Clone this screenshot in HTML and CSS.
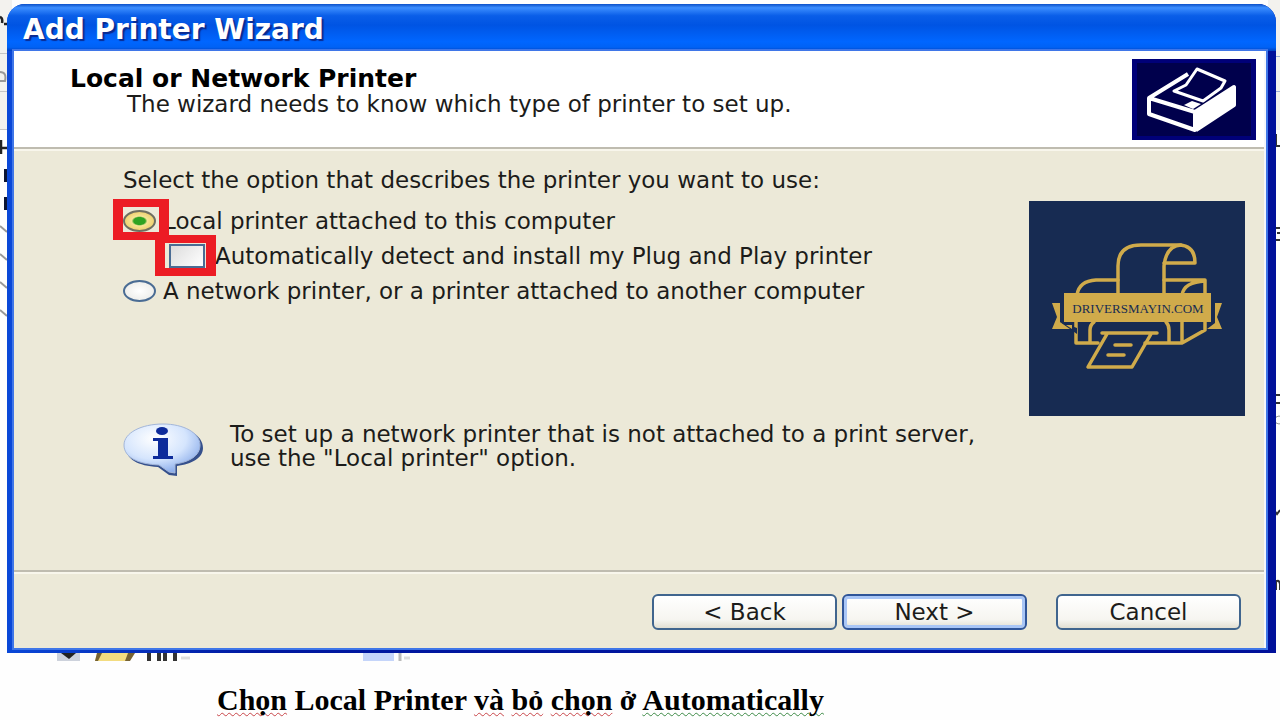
FILE: index.html
```html
<!DOCTYPE html>
<html lang="en">
<head>
<meta charset="utf-8">
<title>Add Printer Wizard</title>
<link rel="stylesheet" href="styles.css">
</head>
<body>
<div class="page">
  <svg class="backdrop backdrop-left" width="12" height="330" viewBox="0 0 12 330" aria-hidden="true">
    <rect width="12" height="130" fill="#f3f2ee"/>
    <path d="M0 53.500H12M0 91.500H12M0 129.500H12" stroke="#c6c6c6"/>
    <path d="M0 17q3 1 2 6M4 24h3M1 140v14M1 148h6" stroke="#222" stroke-width="2.500" fill="none"/>
    <path d="M0 72q7 0 5 9H0M0 226l7 6M0 254l7 6M0 282l7 6M0 310l7 6" stroke="#999" stroke-width="2" fill="none"/>
    <path d="M4 169h4v13H4zM4 197h4v13H4z" fill="#0c1533"/>
  </svg>
  <svg class="backdrop backdrop-right" width="12" height="600" viewBox="0 0 12 600" aria-hidden="true">
    <rect width="12" height="130" fill="#f3f2ee"/>
    <path d="M0 56.500H12M0 91.500H12" stroke="#9fb0d8"/>
    <path d="M8 134v12h4M6 228h6M9 233h3M6 240h6M6 395h6M6 403h6M6 510l3 4 3-4M8 580v10M8 582q3-3 4 2v6" stroke="#333" stroke-width="2" fill="none"/>
    <circle cx="11" cy="420" r="4" stroke="#999" fill="none"/>
  </svg>

  <main class="window">
    <header class="titlebar"><h1 class="title">Add Printer Wizard</h1></header>
    <form class="wizard">
      <section class="banner">
        <div class="banner-text">
          <h2 class="heading">Local or Network Printer</h2>
          <p class="subheading">The wizard needs to know which type of printer to set up.</p>
        </div>
        <svg class="printer-icon" viewBox="0 0 124 81" role="img" aria-label="Printer">
          <rect width="124" height="81" fill="#000078"/>
          <rect x="5" y="4" width="114" height="73" fill="#00004c"/>
          <path d="M17 39 56 15 97 29 103 29V46L64 71 17 54Z" fill="#00004c"/>
          <path d="M63 52 100 28 103 29V46L64 71Z" fill="#fff"/>
          <path d="M17 39 56 15M17 39 63 53V71L17 55ZM63 53 102 28V46L64 71" fill="none" stroke="#fff" stroke-width="4" stroke-linejoin="round"/>
          <path d="M67 45 97 26" stroke="#00004c" stroke-width="3"/>
          <path d="M65 10 93 22 89 29 71 42 42 32 54 26Z" fill="#00004c" stroke="#fff" stroke-width="3" stroke-linejoin="round"/>
          <path d="M52 46 60 42 69 45 61 50Z" fill="#fff"/>
        </svg>
      </section>

      <section class="content">
        <div class="choices">
          <fieldset class="options">
            <legend class="question">Select the option that describes the printer you want to use:</legend>
            <div class="option">
              <span class="mark mark-radio"><input class="radio" type="radio" name="kind" id="local" checked></span>
              <label for="local">Local printer attached to this computer</label>
            </div>
            <div class="option option-nested">
              <span class="mark mark-check"><input class="check" type="checkbox" id="detect"></span>
              <label for="detect">Automatically detect and install my Plug and Play printer</label>
            </div>
            <div class="option">
              <span class="mark"><input class="radio" type="radio" name="kind" id="network"></span>
              <label for="network">A network printer, or a printer attached to another computer</label>
            </div>
          </fieldset>
          <div class="note">
            <svg class="info-icon" viewBox="0 0 84 56" aria-hidden="true">
              <defs>
                <radialGradient id="bubble" cx="40%" cy="30%" r="70%">
                  <stop offset="0" stop-color="#fff"/><stop offset=".6" stop-color="#d5e5fd"/><stop offset="1" stop-color="#8fb0ec"/>
                </radialGradient>
              </defs>
              <path d="M42 4C64 4 80 13 80 26C80 36 69 42 54 44V54L46 53L35 45C15 44 3 37 3 26Z" fill="#35508c"/>
              <path d="M40 2C61 2 77 11 77 23C77 34 66 40 52 42V51L46 50L36 43C14 42 1 35 1 23C1 11 18 2 40 2Z" fill="url(#bubble)" stroke="#a3b6d9"/>
              <ellipse cx="39" cy="9" rx="6" ry="4" fill="#0d2b9b"/>
              <path d="M30 16H45V34H50V37H30V34H35V19H30Z" fill="#0d2b9b"/>
            </svg>
            <p class="note-text">To set up a network printer that is not attached to a print server,<br>use the "Local printer" option.</p>
          </div>
        </div>
        <svg class="brand" viewBox="0 0 216 215" role="img" aria-label="driversmayin.com">
          <rect width="216" height="215" fill="#172b52"/>
          <g fill="none" stroke="#d0ab4b" stroke-width="3.500" stroke-linejoin="round" stroke-linecap="round">
            <path d="M89 96V65Q89 44 112 44H151Q166 45 166 62H135"/>
            <path d="M135 96V65Q137 45 152 44M82 99H140"/>
            <path d="M89 79H67Q50 80 48 94M135 79H176V94M176 80Q155 81 153 94"/>
            <path d="M47 121V142H69M61 142V129Q61 124 65 121M116 142H153L176 129V121M153 121V142M140 142V129Q140 124 137 121"/>
            <path d="M73 132H128M78 133 59 166H103L122 133M86 144H102M79 154H95"/>
          </g>
          <path d="M23 102H31V124L43 128V128H23L28 116ZM23 128L28 116 31 121 43 128H23ZM193 102H186V122L178 128H193L188 116Z" fill="#d0ab4b"/>
          <path d="M31 121 48 127V133Z" fill="#172b52"/>
          <path d="M37 124 43 128V124Z" fill="#d0ab4b"/>
          <rect x="35" y="92" width="147" height="29" fill="#d0ab4b"/>
          <text class="brand-text" x="109" y="112" text-anchor="middle">DRIVERSMAYIN.COM</text>
        </svg>
      </section>

      <footer class="actions">
        <button class="button" type="button">&lt; Back</button>
        <button class="button button-default" type="button">Next &gt;</button>
        <button class="button button-cancel" type="button">Cancel</button>
      </footer>
    </form>
  </main>

  <svg class="under" width="420" height="8" viewBox="0 0 420 8" aria-hidden="true">
    <path d="M57 0h23v8H57z" fill="#cdd2dc"/>
    <path d="M61 0h15l-7 6z" fill="#222"/>
    <path d="M97 0h36l-6 8H95z" fill="#f3dc80"/>
    <path d="M97 0h5l-4 8h-3zM128 0h7l-5 8h-5z" fill="#776333"/>
    <path d="M149 0v8M159 0v8M165 0v8M175 0v8" stroke="#333" stroke-width="4"/>
    <path d="M181 5h9M404 5h6" stroke="#ddd" stroke-width="3"/>
    <path d="M363 0h31v8h-31z" fill="#c5d5fa"/>
    <path d="M400 0v8" stroke="#bbb" stroke-width="3"/>
  </svg>
  <p class="caption"><span class="spell">Chọn</span> Local Printer <span class="spell">và</span> <span class="spell">bỏ</span> <span class="spell">chọn</span> ở <span class="spell grammar">Automatically</span></p>
</div>
</body>
</html>
```
FILE: styles.css
```css
* { box-sizing: border-box; }

body {
  margin: 0;
  background: #fefefe;
  color: #1c1c1a;
  font-family: "DejaVu Sans", Verdana, sans-serif;
  font-size: 23px;
}

h1, h2, p { margin: 0; }

.page {
  position: relative;
  display: flex;
  flex-direction: column;
  min-height: 100vh;
  padding-top: 4px;
  overflow: hidden;
}

.backdrop { position: absolute; top: 0; }
.backdrop-left { left: 0; }
.backdrop-right { right: 0; }

.window {
  position: relative;
  flex: 1;
  display: flex;
  flex-direction: column;
  margin: 0 4px 0 7px;
  border-radius: 18px 18px 0 0;
  background: linear-gradient(90deg, #0a48d8, #0018a0 20%, #00109a);
  overflow: hidden;
}

.titlebar {
  display: flex;
  align-items: center;
  height: 47px;
  padding: 4px 16px 0;
  background: linear-gradient(#0b50c8, #3c8eff 8%, #0a5ee8 25%, #0054e3 45%, #0066ff 80%, #0062f5 92%, #0040c0);
}

.title {
  color: #fff;
  font-size: 28px;
  line-height: 28px;
  text-shadow: 2px 2px 1px #0a2a90;
}

.wizard {
  flex: 1;
  display: flex;
  flex-direction: column;
  margin: 0 10px 5px 7px;
  border-right: 2px solid #f4f6fb;
  background: #ece9d8;
  box-shadow: 0 0 0 2px #3f76e8;
}

.banner {
  display: flex;
  justify-content: space-between;
  padding: 8px 8px 7px 56px;
  background: #fff;
  border-bottom: 2px solid #bfbcb0;
}

.banner-text { padding-top: 7px; }
.heading { font-size: 25px; line-height: 26px; color: #000; }
.subheading { padding-left: 57px; line-height: 24px; }
.printer-icon { width: 124px; height: 81px; flex: none; }

.content {
  flex: 1;
  display: flex;
  justify-content: space-between;
  padding: 17px 19px 0 109px;
  border-top: 2px solid #f8f6ec;
}

.options { margin: 0; padding: 0; border: 0; }
.question { padding: 0; line-height: 24px; margin-bottom: 11px; }

.option { display: flex; align-items: center; gap: 7px; height: 35px; }
.option-nested { padding-left: 46px; gap: 10px; }

.mark { position: relative; display: flex; flex: none; }
.mark::after { position: absolute; pointer-events: none; }
.mark-radio::after { content: ""; inset: -11px -13px -8px -10px; border: solid #ec1c24; border-width: 8px 10px; }
.mark-check::after { content: ""; inset: -9px -11px -8px -14px; border: solid #ec1c24; border-width: 8px 10px; }

.radio, .check { appearance: none; margin: 0; border: 2px solid #4a6c94; }
.radio {
  width: 33px;
  height: 22px;
  border-radius: 50%;
  background: radial-gradient(#fff, #e8e8e4);
}
.radio:checked {
  border-color: #6f6f60;
  background: radial-gradient(ellipse, #2fa322 0 28%, #f5e596 38%, #ecc75c 90%);
}
.check {
  width: 36px;
  height: 24px;
  background: linear-gradient(135deg, #dcdcdc, #fff);
}

.note { display: flex; gap: 23px; padding-top: 114px; }
.info-icon { width: 84px; height: 56px; flex: none; }
.note-text { line-height: 24px; }

.brand { width: 216px; height: 215px; flex: none; margin-top: 33px; }
.brand-text { font-family: "Liberation Serif", serif; font-size: 13px; fill: #172b52; }

.actions {
  display: flex;
  justify-content: flex-end;
  gap: 5px;
  padding: 22px 23px 18px;
  border-top: 2px solid #bfbcb0;
  box-shadow: inset 0 2px #f8f6ec;
}

.button {
  width: 185px;
  height: 36px;
  padding: 0;
  border: 2px solid #40658e;
  border-radius: 6px;
  background: linear-gradient(#fff, #f6f5f0 75%, #e2dfd2);
  color: #1c1c1a;
  font: inherit;
}
.button-default { border-color: #2f5599; box-shadow: inset 0 0 0 3px #a9c6f6; }
.button-cancel { margin-left: 24px; }

.under { flex: none; display: block; }

.caption {
  padding: 22px 0 4px 217px;
  color: #000;
  font-family: "Liberation Serif", "Times New Roman", serif;
  font-size: 30px;
  font-weight: bold;
  line-height: 33px;
}
.spell { text-decoration: underline wavy #c8464a 1px; text-decoration-skip-ink: none; text-underline-offset: 2px; }
.grammar { text-decoration-color: #3d8a46; }
```
